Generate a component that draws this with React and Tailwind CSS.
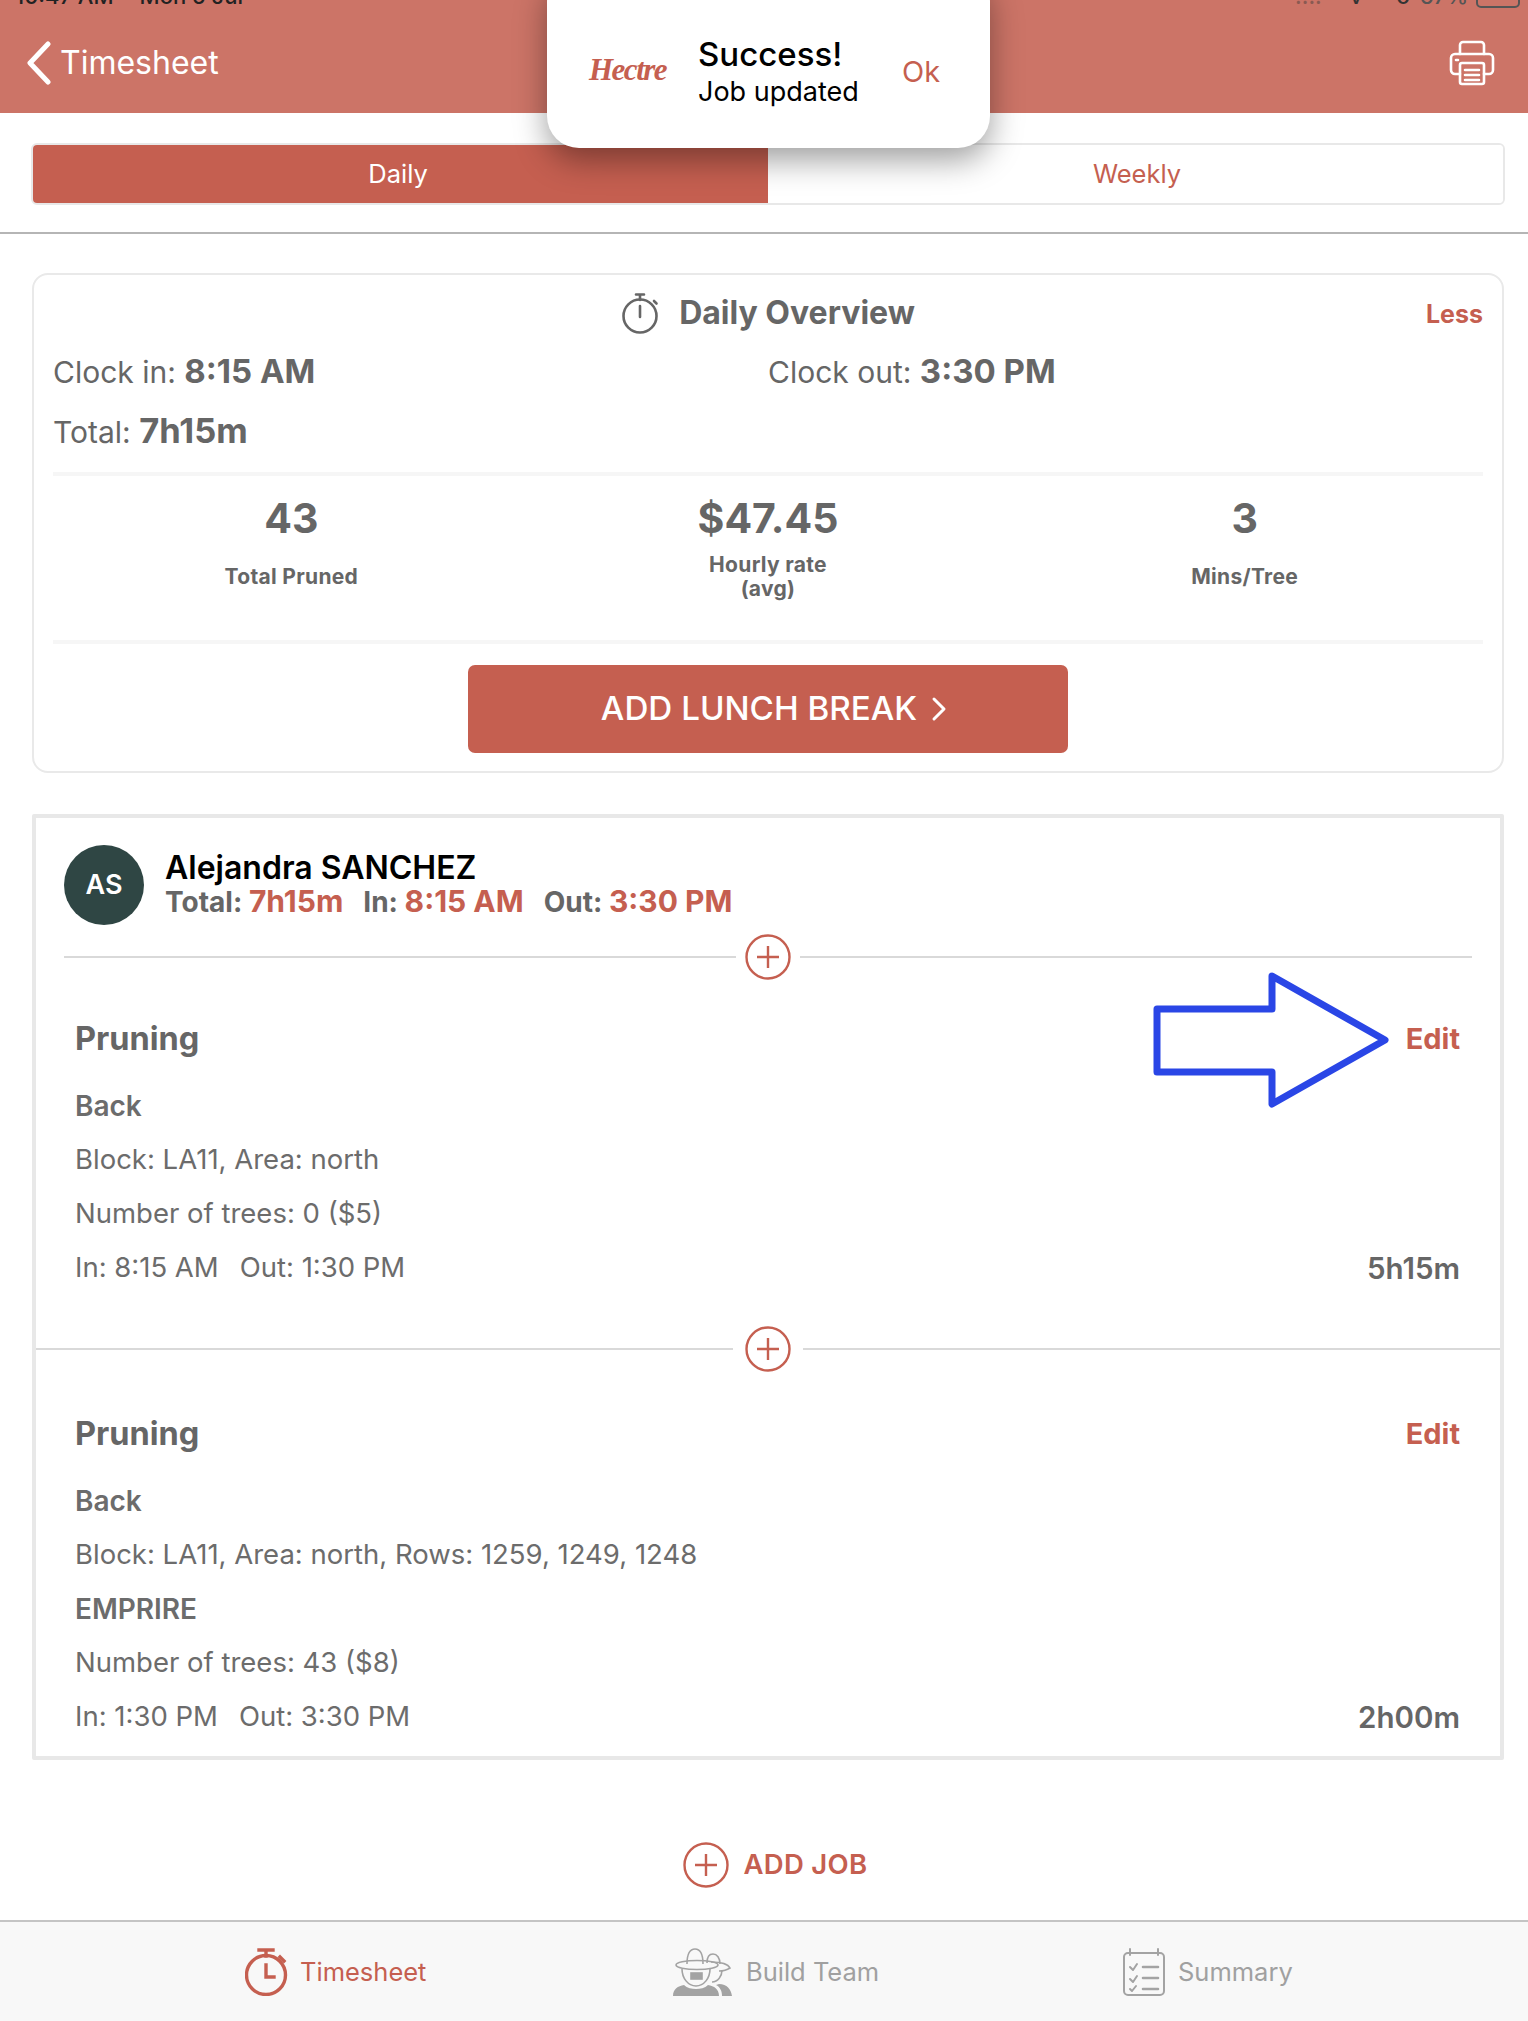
const INTER = { fontFamily: "Inter, 'Noto Sans', sans-serif" };

function AddCircle({ size = 46 }) {
  return (
    <svg width={size} height={size} viewBox="0 0 46 46" fill="none" stroke="#c55f50" strokeWidth="2.4" className="shrink-0">
      <circle cx="23" cy="23" r="21.5" />
      <path d="M23 12v22M12 23h22" />
    </svg>
  );
}

function Printer() {
  return (
    <svg width="46" height="46" viewBox="0 0 46 46" fill="none" stroke="#fff" strokeWidth="2.6" strokeLinejoin="round" strokeLinecap="round">
      <path d="M11 14V5a3 3 0 0 1 3-3h18a3 3 0 0 1 3 3v9" />
      <path d="M11 34H6a4 4 0 0 1-4-4V18a4 4 0 0 1 4-4h34a4 4 0 0 1 4 4v12a4 4 0 0 1-4 4h-5" />
      <rect x="11" y="23" width="24" height="21" rx="2" />
      <path d="M16 30h14M16 35h14M16 40h14M7 20h2" />
    </svg>
  );
}

function Stopwatch() {
  return (
    <svg width="38" height="42" viewBox="0 0 38 42" fill="none" stroke="#666" strokeWidth="2.6" strokeLinecap="round">
      <circle cx="19" cy="24" r="16.5" />
      <path d="M15 2.5h8M19 3v5M19 14v11M33 9l2.5 2.5" />
    </svg>
  );
}

function TimesheetIcon() {
  return (
    <svg width="44" height="48" viewBox="0 0 44 48" fill="none" stroke="#c55f50" strokeWidth="3.4" strokeLinecap="square">
      <circle cx="21" cy="27" r="19.5" />
      <path d="M14 2h14M21 3v5M21 17v12h8M35 9l4 4" />
    </svg>
  );
}

function BuildTeamIcon() {
  return (
    <svg width="60" height="48" viewBox="0 0 60 48" fill="none" stroke="#a3a3a3" strokeWidth="1.6">
      <path d="M14 16C14 6 17 1 22 1s8 5 8 15" />
      <path d="M34 15c0-6 2-9 6-9s7 4 7 10" />
      <ellipse cx="24" cy="17" rx="21" ry="4.5" />
      <path d="M38 14c9 0 17 2 19 6-3 2-7 3-11 3" />
      <path d="M9 21c0 9 6 17 14 17s14-8 14-17" />
      <path d="M39 34c6 0 10-6 10-12" />
      <rect x="18" y="25" width="11" height="6" fill="#a3a3a3" />
      <path d="M0 48c0-7 5-10 11-11 3 3 8 4 12 4s9-1 12-4c6 1 11 4 11 11z" fill="#a3a3a3" stroke="none" />
      <path d="M49 48c0-5-2-9-6-11l3-1c8 0 12 5 13 12z" fill="#a3a3a3" stroke="none" />
    </svg>
  );
}

function SummaryIcon() {
  return (
    <svg width="44" height="48" viewBox="0 0 44 48" fill="none" stroke="#a3a3a3" strokeWidth="2" strokeLinecap="round" strokeLinejoin="round">
      <rect x="2" y="5" width="40" height="42" rx="4" />
      <path d="M8 1v6M36 1v6M8 19l3 3 4-6M8 31l3 3 4-6M8 41l2 2 4-5" />
      <path d="M21 19h15M21 30h15M21 41h15" strokeWidth="2.6" />
    </svg>
  );
}

function Stat({ value, label }) {
  return (
    <div className="flex flex-col items-center">
      <div className="h-[58px] flex items-center text-[41px] font-bold text-[#666] leading-none">{value}</div>
      <div className="h-[60px] flex items-center justify-center text-center text-[21px] font-bold leading-[24px] text-[#666] tracking-[0.3px]">
        {label}
      </div>
    </div>
  );
}

function Line({ children, right }) {
  return (
    <div className="h-[54px] flex items-center justify-between text-[27.5px] text-[#6c6c6c]">
      <span>{children}</span>
      {right && <span className="text-[29.5px] font-semibold text-[#666]">{right}</span>}
    </div>
  );
}

function Job({ lines, times, total }) {
  return (
    <div className="pl-[39px] pr-[40px]">
      <div className="h-[66px] mb-[7px] flex items-center justify-between">
        <span className="text-[32.5px] font-bold text-[#666]">Pruning</span>
        <span className="text-[29px] font-bold text-[#c55f50]">Edit</span>
      </div>
      <Line><b className="text-[28px] font-semibold">Back</b></Line>
      {lines.map((l) => (
        <Line key={l.text}>{l.bold ? <b className="text-[28px] font-semibold">{l.text}</b> : l.text}</Line>
      ))}
      <Line right={total}>
        {times[0]}
        <span className="ml-[21px]">{times[1]}</span>
      </Line>
    </div>
  );
}

export default function App() {
  return (
    <div className="relative w-[1528px] h-[2021px] overflow-hidden bg-white flex flex-col" style={INTER}>
      {/* status bar, cut off by the top of the picture */}
      <div className="absolute left-[15px] top-[-20px] text-[22px] font-medium text-[#222] flex gap-[26px]">
        <span>10:47 AM</span>
        <span>Mon 5 Jul</span>
      </div>
      <div className="absolute right-[8px] top-[-20px] text-[22px] font-medium text-[#555] flex items-center gap-[8px]">
        <span className="mr-[20px] text-[#8a5a52]">....</span>
        <span className="mr-[26px] text-[#333]">v</span>
        <span className="mr-[2px] text-[#333]">o</span>
        <span>67%</span>
        <span className="w-[44px] h-[22px] border-2 border-[#555] rounded-[5px]" />
      </div>

      <header className="h-[113px] bg-[#cc7467] flex items-center justify-between pl-[25px] pr-[33px] shrink-0 pt-[13px]">
        <div className="flex items-center gap-[8px] text-white text-[32px]">
          <svg width="27" height="44" viewBox="0 0 27 44" fill="none" stroke="#fff" strokeWidth="5" strokeLinecap="round" strokeLinejoin="round">
            <path d="M23 3 5 22l18 19" />
          </svg>
          <span>Timesheet</span>
        </div>
        <Printer />
      </header>

      {/* toast */}
      <div className="absolute left-[547px] top-[-30px] w-[443px] h-[178px] bg-white rounded-[32px] shadow-[0_12px_32px_rgba(0,0,0,0.38)] flex items-center pt-[25px] pl-[42px] z-10">
        <span className="w-[109px] text-[#c55f50] text-[31px] font-bold italic tracking-[-1.5px] pb-[2px]" style={{ fontFamily: "'Liberation Serif', serif" }}>
          Hectre
        </span>
        <div className="w-[204px] text-black">
          <div className="text-[33px] font-medium leading-[40px]">Success!</div>
          <div className="text-[27px] leading-[36px]">Job updated</div>
        </div>
        <span className="text-[29px] text-[#c55f50]">Ok</span>
      </div>

      <div className="h-[121px] shrink-0 border-b-2 border-[#b5b5b5] pl-[31px] pr-[23px] pt-[30px]">
        <div className="h-[62px] grid grid-cols-2 rounded-[6px] border-2 border-[#e8e8e8] overflow-hidden text-[25.5px]">
          <div className="bg-[#c55f50] text-white flex items-center justify-center pr-[5px]">Daily</div>
          <div className="bg-white text-[#c55f50] flex items-center justify-center pl-[3px]">Weekly</div>
        </div>
      </div>

      <main className="flex-1 pl-[32px] pr-[24px] pt-[39px] flex flex-col">
        {/* overview */}
        <section className="h-[500px] rounded-[16px] border-2 border-[#e9e9e9] px-[19px] shrink-0">
          <div className="relative h-[76px] flex items-center justify-center gap-[20px]">
            <Stopwatch />
            <span className="text-[32px] font-bold text-[#666]">Daily Overview</span>
            <span className="absolute right-[0px] top-[21px] text-[25px] font-bold text-[#c55f50]">Less</span>
          </div>
          <div className="grid grid-cols-2 h-[44px] items-center text-[30px] leading-[36px] text-[#666] pb-[3px]">
            <div>Clock in: <b className="text-[33px] font-bold">8:15 AM</b></div>
            <div>Clock out: <b className="text-[33px] font-bold">3:30 PM</b></div>
          </div>
          <div className="h-[77px] flex items-center text-[30px] text-[#666] pb-[5px]">
            <div>Total: <b className="text-[34.5px] font-bold">7h15m</b></div>
          </div>
          <div className="h-[4px] bg-[#f6f6f6]" />
          <div className="grid grid-cols-3 h-[164px] pt-[13px]">
            <Stat value="43" label="Total Pruned" />
            <Stat value="$47.45" label={<>Hourly rate<br />(avg)</>} />
            <Stat value="3" label="Mins/Tree" />
          </div>
          <div className="h-[4px] bg-[#f6f6f6]" />
          <div className="flex justify-center pt-[21px]">
            <button className="w-[600px] h-[88px] rounded-[7px] bg-[#c55f50] text-white text-[33.2px] font-medium flex items-center justify-center gap-[14px] pl-[12px]">
              ADD LUNCH BREAK
              <svg width="16" height="26" viewBox="0 0 16 26" fill="none" stroke="#fff" strokeWidth="3" strokeLinecap="round" strokeLinejoin="round">
                <path d="m3 3 10 10L3 23" />
              </svg>
            </button>
          </div>
        </section>

        {/* worker */}
        <section className="relative mt-[41px] h-[946px] border-4 border-[#e8e8e8] rounded-[2px] shrink-0">
          <div className="px-[28px] pt-[27px] pb-[26px]">
            <div className="flex items-center gap-[21px]">
              <div className="w-[80px] h-[80px] rounded-full bg-[#2f4644] text-white text-[27px] font-semibold flex items-center justify-center">AS</div>
              <div>
                <div className="text-[32px] font-semibold text-black leading-[32px]">Alejandra SANCHEZ</div>
                <div className="text-[28px] font-bold text-[#666] leading-[34px] flex gap-[20px]">
                  <span>Total: <span className="text-[30px] text-[#c55f50]">7h15m</span></span>
                  <span>In: <span className="text-[30px] text-[#c55f50]">8:15 AM</span></span>
                  <span>Out: <span className="text-[30px] text-[#c55f50]">3:30 PM</span></span>
                </div>
              </div>
            </div>
            <div className="mt-[9px] flex items-center gap-[9px]">
              <div className="h-[2px] flex-1 bg-[#d9d9d9]" />
              <AddCircle />
              <div className="h-[2px] flex-1 bg-[#d9d9d9]" />
            </div>
          </div>

          <Job
            lines={[{ text: "Block: LA11, Area: north" }, { text: "Number of trees: 0 ($5)" }]}
            times={["In: 8:15 AM", "Out: 1:30 PM"]}
            total="5h15m"
          />

          <div className="h-[106px] flex items-center gap-[12px] pt-[1px]">
            <div className="h-[2px] flex-1 bg-[#d9d9d9]" />
            <AddCircle />
            <div className="h-[2px] flex-1 bg-[#d9d9d9]" />
          </div>

          <Job
            lines={[
              { text: "Block: LA11, Area: north, Rows: 1259, 1249, 1248" },
              { text: "EMPRIRE", bold: true },
              { text: "Number of trees: 43 ($8)" },
            ]}
            times={["In: 1:30 PM", "Out: 3:30 PM"]}
            total="2h00m"
          />

          {/* blue annotation arrow drawn over the row */}
          <svg className="absolute left-[1114px] top-[151px]" width="240" height="140" viewBox="0 0 240 140" fill="none" stroke="#2a46e6" strokeWidth="7" strokeLinejoin="round">
            <path d="M7 40h115V7l113 64-113 64v-32H7z" />
          </svg>
        </section>

        <div className="h-[160px] flex items-center justify-center gap-[15px] pl-[14px] pt-[50px]">
          <AddCircle />
          <span className="text-[27.5px] font-semibold text-[#c55f50] tracking-[0.3px]">ADD JOB</span>
        </div>
      </main>

      <nav className="h-[101px] shrink-0 bg-[#f8f8f8] border-t-2 border-[#c4c4c4] relative text-[25.5px] flex items-center pl-[245px] pt-[1px]">
        <div className="w-[428px] flex items-center gap-[11px] text-[#c55f50]">
          <TimesheetIcon />
          <span>Timesheet</span>
        </div>
        <div className="w-[449px] flex items-center gap-[13px] text-[#a0a0a0]">
          <BuildTeamIcon />
          <span>Build Team</span>
        </div>
        <div className="flex items-center gap-[12px] text-[#a0a0a0]">
          <SummaryIcon />
          <span>Summary</span>
        </div>
      </nav>
    </div>
  );
}
